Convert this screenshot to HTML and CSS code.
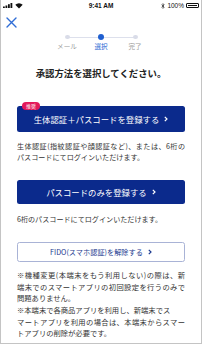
FILE: index.html
```html
<!DOCTYPE html>
<html lang="ja">
<head>
<meta charset="utf-8">
<link rel="stylesheet" href="styles.css">
</head>
<body>
<div class="screen">
  <div class="status">
    <div class="st-left">
      <svg width="10" height="5" viewBox="0 0 10 5"><rect x="0" y="3.5" width="1.8" height="1.5" fill="#111"/><rect x="2.5" y="2.5" width="1.8" height="2.5" fill="#111"/><rect x="5" y="1.2" width="1.8" height="3.8" fill="#111"/><rect x="7.5" y="0" width="1.8" height="5" fill="#111"/></svg>
      <svg width="8" height="6" viewBox="0 0 8 6"><path d="M4 5.6 L0.3 1.8 A5.3 5.3 0 0 1 7.7 1.8 Z" fill="#111"/></svg>
    </div>
    <div class="st-time">9:41 AM</div>
    <div class="st-right">
      <svg width="4" height="6" viewBox="0 0 4 6"><path d="M0.5 1.6 L3.2 4.2 L2 5.4 L2 0.6 L3.2 1.8 L0.5 4.4" fill="none" stroke="#111" stroke-width="0.6"/></svg>
      <span class="pct">100%</span>
      <span class="battery"><span class="batt-fill"></span></span>
    </div>
  </div>

  <div class="header">
    <svg class="close" width="11" height="11" viewBox="0 0 11 11"><path d="M1 1 L10 10 M10 1 L1 10" stroke="#2f6dd6" stroke-width="1.4" stroke-linecap="round"/></svg>
  </div>

  <div class="stepper">
    <div class="step"><span class="dot"></span><span class="lbl">メール</span></div>
    <div class="step active"><span class="dot"></span><span class="lbl">選択</span></div>
    <div class="step"><span class="dot"></span><span class="lbl">完了</span></div>
  </div>

  <h1 class="title">承認方法を選択してください。</h1>

  <div class="content">
    <a class="btn primary first">
      <span class="badge">推奨</span>
      生体認証＋パスコードを登録する<svg class="chev" width="4" height="6" viewBox="0 0 4 6"><path d="M0.8 0.8 L3 3 L0.8 5.2" fill="none" stroke="currentColor" stroke-width="1.2"/></svg>
    </a>
    <p class="desc d1"><span class="ln full">生体認証(指紋認証や顔認証など)、または、6桁の</span><span class="ln">パスコードにてログインいただけます。</span></p>

    <a class="btn primary second">パスコードのみを登録する<svg class="chev" width="4" height="6" viewBox="0 0 4 6"><path d="M0.8 0.8 L3 3 L0.8 5.2" fill="none" stroke="currentColor" stroke-width="1.2"/></svg></a>
    <p class="desc d2"><span class="ln">6桁のパスコードにてログインいただけます。</span></p>

    <a class="btn outline">FIDO(スマホ認証)を解除する<svg class="chev" width="4" height="6" viewBox="0 0 4 6"><path d="M0.8 0.8 L3 3 L0.8 5.2" fill="none" stroke="currentColor" stroke-width="1.2"/></svg></a>

    <p class="notes">
      <span class="ln full">※機種変更(本端末をもう利用しない)の際は、新</span>
      <span class="ln full">端末でのスマートアプリの初回設定を行うのみで</span>
      <span class="ln">問題ありません。</span>
      <span class="ln">※本端末で各商品アプリを利用し、新端末でス</span>
      <span class="ln full">マートアプリを利用の場合は、本端末からスマー</span>
      <span class="ln">トアプリの削除が必要です。</span>
    </p>
  </div>
</div>
</body>
</html>
```

FILE: styles.css
```css
* { box-sizing: border-box; }
html, body { margin: 0; padding: 0; background: #fff; }
body { font-family: "Noto Sans CJK JP", "Noto Sans", sans-serif; color: #333; }

.screen {
  width: 202px;
  height: 344px;
  border-left: 1px solid #c4c4c4;
  border-right: 1px solid #c4c4c4;
  border-bottom: 1px solid #c4c4c4;
  background: #fff;
  overflow: hidden;
}

.status {
  height: 11px;
  display: grid;
  grid-template-columns: 1fr auto 1fr;
  align-items: center;
  padding: 0 2px 0 2px;
}
.st-left { display: flex; align-items: center; gap: 2px; }
.st-time { font-family: "Liberation Sans", sans-serif; font-weight: 700; font-size: 6.5px; color: #111; }
.st-right { display: flex; align-items: center; justify-content: flex-end; gap: 2px; }
.pct { font-family: "Liberation Sans", sans-serif; font-size: 6.5px; color: #111; }
.battery {
  width: 13px; height: 5px; border: 0.6px solid #111; border-radius: 1px; padding: 0.6px;
  display: flex;
}
.batt-fill { flex: 1; background: #111; }

.header { height: 16px; padding: 6px 0 0 5px; }
.close { display: block; }

.stepper {
  position: relative;
  display: flex;
  justify-content: center;
  margin-top: 7px;
  height: 17px;
}
.stepper::before {
  content: "";
  position: absolute;
  left: 67px; width: 68px; top: 2.5px; height: 1px;
  background: #dde0ec;
}
.step {
  width: 34px;
  display: flex; flex-direction: column; align-items: center;
  position: relative;
}
.dot { width: 5px; height: 5px; border-radius: 50%; background: #d9dce8; margin-top: 0.5px; }
.step.active .dot { width: 6px; height: 6px; background: #1f5fd0; margin-top: 0; }
.lbl { font-size: 6.6px; line-height: 9px; color: #9a9a9a; margin-top: 3px; white-space: nowrap; }
.step.active .lbl { color: #2a67d3; margin-top: 2px; }

.title {
  margin: 15px 0 0 0;
  text-align: center;
  font-size: 9.4px;
  line-height: 14px;
  font-weight: 700;
  color: #222;
}

.content { padding: 0 16px 0 16px; }

.btn {
  display: flex; align-items: center; justify-content: center;
  position: relative;
  border-radius: 2.5px;
  text-decoration: none;
  white-space: nowrap;
}
.primary { background: #0b2a8c; color: #fff; font-size: 8.4px; }
.first { margin-top: 26px; height: 26px; }
.second { margin-top: 17.5px; height: 24px; }
.outline {
  margin-top: 17.5px; height: 20px;
  border: 1px solid #a9b3d6; color: #1c3a8f; font-size: 7.2px; background: #fff;
}
.chev { margin-left: 5px; display: block; }

.badge {
  position: absolute;
  left: 5px; top: -4px;
  height: 8px; padding: 0 4px;
  border-radius: 4px;
  background: #e3195a;
  color: #fff;
  font-size: 5px; line-height: 8px;
}

.desc, .notes { margin: 0; font-size: 7.1px; color: #333; }
.ln { display: block; white-space: nowrap; }
.ln.full { text-align: justify; text-align-last: justify; }
.desc .ln { line-height: 11px; }
.d1 { margin-top: 8.5px; }
.d2 { margin-top: 9.5px; }
.notes { margin-top: 8.2px; font-size: 7.3px; }
.notes .ln { line-height: 11.6px; }
```
